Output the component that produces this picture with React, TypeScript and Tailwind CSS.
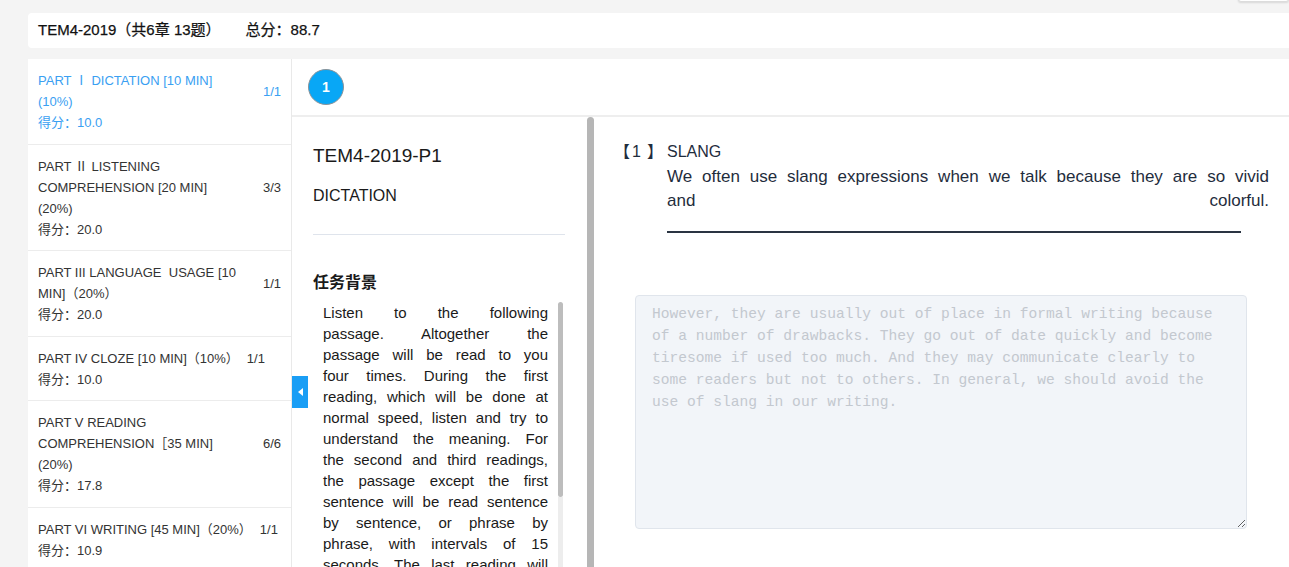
import React from 'react';

const FONT = "font-['Liberation_Sans','Noto_Sans_CJK_SC',sans-serif]";

type Part = { lines: string[]; count: string; score: string; active?: boolean };

const parts: Part[] = [
  { lines: ['PART Ⅰ DICTATION [10 MIN]', '(10%)'], count: '1/1', score: '得分：10.0', active: true },
  { lines: ['PART Ⅱ LISTENING', 'COMPREHENSION [20 MIN]', '(20%)'], count: '3/3', score: '得分：20.0' },
  { lines: ['PART III LANGUAGE  USAGE [10', 'MIN]（20%）'], count: '1/1', score: '得分：20.0' },
  { lines: ['PART IV CLOZE [10 MIN]（10%）'], count: '1/1', score: '得分：10.0' },
  { lines: ['PART V READING', 'COMPREHENSION［35 MIN]', '(20%)'], count: '6/6', score: '得分：17.8' },
  { lines: ['PART VI WRITING [45 MIN]（20%）'], count: '1/1', score: '得分：10.9' },
];

const background = [
  'Listen to the following',
  'passage. Altogether the',
  'passage will be read to you',
  'four times. During the first',
  'reading, which will be done at',
  'normal speed, listen and try to',
  'understand the meaning. For',
  'the second and third readings,',
  'the passage except the first',
  'sentence will be read sentence',
  'by sentence, or phrase by',
  'phrase, with intervals of 15',
  'seconds. The last reading will',
];

const answer =
  'However, they are usually out of place in formal writing because of a number of drawbacks. They go out of date quickly and become tiresome if used too much. And they may communicate clearly to some readers but not to others. In general, we should avoid the use of slang in our writing.';

export default function App() {
  return (
    <div className={`relative h-[567px] w-full overflow-hidden bg-[#f4f4f4] pl-[28px] pt-[13px] ${FONT}`}>
      {/* cut-off control in the top right corner */}
      <div className="absolute right-0 top-[-10px] h-[12px] w-[51px] rounded-b-[3px] border border-[#dcdcdc] bg-white shadow-[0_1px_2px_rgba(0,0,0,0.12)]" />

      <Header />

      <main className="mt-[11px] flex h-[600px] bg-white">
        <Sidebar />
        <div className="flex min-w-0 flex-1 flex-col">
          <div className="flex h-[58px] items-center border-b-2 border-[#eeeeee] pl-[16px]">
            <div className="flex h-[36px] w-[36px] items-center justify-center rounded-full border border-[#8a9298] bg-[#08a7f6] text-[14px] font-bold text-white">
              1
            </div>
          </div>
          <div className="relative flex min-h-0 flex-1">
            <TaskPanel />
            <div className="ml-[1px] w-[7px] shrink-0 rounded-t-[4px] bg-[#b6b6b6]" />
            <QuestionPanel />
            {/* collapse tab */}
            <div className="absolute left-0 top-[259px] flex h-[32px] w-[16px] items-center justify-center bg-[#1a9ef5]">
              <div className="h-0 w-0 border-y-[4px] border-r-[5px] border-y-transparent border-r-white" />
            </div>
          </div>
        </div>
      </main>
    </div>
  );
}

function Header() {
  return (
    <header className="flex h-[35px] items-center rounded-l-[4px] bg-white pl-[10px] text-[15px] text-[#111111] [-webkit-text-stroke:0.25px_#111111]">
      <span>TEM4-2019（共6章 13题）</span>
      <span className="ml-[25px]">总分：88.7</span>
    </header>
  );
}

function Sidebar() {
  return (
    <aside className="w-[264px] shrink-0 border-r border-[#e9e9e9]">
      {parts.map((p, i) => {
        const wrapped = p.lines.length > 1;
        return (
          <div
            key={i}
            className={`border-b border-[#ececec] pb-[10.5px] pl-[10px] pr-[11px] pt-[11px] text-[13px] leading-[21px] ${
              p.active ? 'text-[#3aa0f2]' : 'text-[#333333]'
            }`}
          >
            <div className={`flex items-center ${wrapped ? 'gap-[15px]' : 'gap-[8px]'}`}>
              <div className={wrapped ? 'w-[210px] shrink-0' : 'shrink-0'}>
                {p.lines.map((l, j) => (
                  <div key={j} className="whitespace-pre">
                    {l}
                  </div>
                ))}
              </div>
              <span className="shrink-0">{p.count}</span>
            </div>
            <div>{p.score}</div>
          </div>
        );
      })}
    </aside>
  );
}

function TaskPanel() {
  return (
    <section className="w-[294px] shrink-0 px-[21px] pt-[26px] text-[#1a1a1a]">
      <h1 className="text-[19px] leading-[26px]">TEM4-2019-P1</h1>
      <h2 className="mt-[15px] text-[16px] leading-[24px]">DICTATION</h2>
      <div className="mt-[26px] h-px bg-[#dfe4ec]" />
      <h3 className="mt-[36px] text-[16px] font-bold leading-[24px]">任务背景</h3>
      <div className="mt-[7px] flex">
        <div className="w-[235px] pl-[10px] text-[15px] leading-[21px]">
          {background.map((l, i) => (
            <div key={i} className="text-justify [text-align-last:justify]">
              {l}
            </div>
          ))}
        </div>
        <div className="ml-[10px] flex w-[5px] flex-col">
          <div className="h-[195px] rounded-[3px] bg-[#bdbdbd]" />
          <div className="h-[100px] bg-[#ededed]" />
        </div>
      </div>
    </section>
  );
}

function QuestionPanel() {
  return (
    <section className="min-w-0 flex-1 pl-[26px] pr-[20px] pt-[24px] text-[#1f2d3d]">
      <div className="flex">
        <div className="-ml-[6px] flex w-[53px] shrink-0 text-[16px] leading-[22px]">
          <span>【</span>
          <span className="ml-[2px]">1</span>
          <span className="ml-[6px]">】</span>
        </div>
        <div className="min-w-0 flex-1">
          <div className="text-[16px] leading-[22px]">SLANG</div>
          <div className="mt-[2px] text-[17px] leading-[24px]">
            <div className="text-justify [text-align-last:justify]">
              We often use slang expressions when we talk because they are so vivid
            </div>
            <div className="flex justify-between">
              <span>and</span>
              <span>colorful.</span>
            </div>
          </div>
          <div className="mt-[18px] h-[2px] w-[574px] bg-[#2a3442]" />
        </div>
      </div>
      <textarea
        readOnly
        value={answer}
        className="ml-[15px] mt-[62px] block h-[234px] w-[612px] rounded-[4px] border border-[#e0e5ec] bg-[#f2f5f9] px-[16px] py-[7px] font-['Liberation_Mono',monospace] text-[14.6px] leading-[22px] text-[#c3c8cf] outline-none"
      />
    </section>
  );
}
